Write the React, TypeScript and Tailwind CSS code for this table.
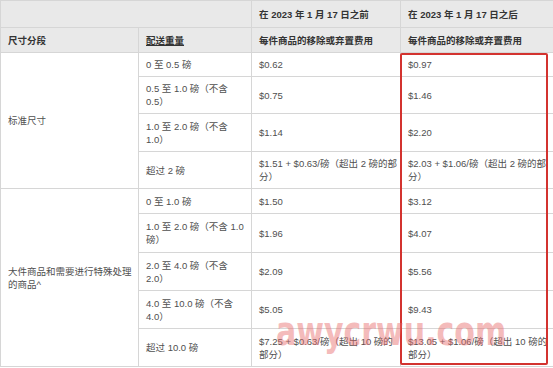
import React from "react";

type Row = {
  weight: React.ReactNode;
  before: React.ReactNode;
  after: React.ReactNode;
  h: string;
};

const standard: Row[] = [
  { weight: "0 至 0.5 磅", before: "$0.62", after: "$0.97", h: "h-[24px]" },
  {
    weight: (<>0.5 至 1.0 磅（不含<br />0.5）</>),
    before: "$0.75",
    after: "$1.46",
    h: "h-[37px]",
  },
  {
    weight: (<>1.0 至 2.0 磅（不含<br />1.0）</>),
    before: "$1.14",
    after: "$2.20",
    h: "h-[38px]",
  },
  {
    weight: "超过 2 磅",
    before: (<>$1.51 + $0.63/磅（超出 2 磅的部<br />分）</>),
    after: (<>$2.03 + $1.06/磅（超出 2 磅的部<br />分）</>),
    h: "h-[37px]",
  },
];

const oversize: Row[] = [
  { weight: "0 至 1.0 磅", before: "$1.50", after: "$3.12", h: "h-[25px]" },
  {
    weight: (<>1.0 至 2.0 磅（不含 1.0<br />磅）</>),
    before: "$1.96",
    after: "$4.07",
    h: "h-[39px]",
  },
  {
    weight: (<>2.0 至 4.0 磅（不含<br />2.0）</>),
    before: "$2.09",
    after: "$5.56",
    h: "h-[38px]",
  },
  {
    weight: (<>4.0 至 10.0 磅（不含<br />4.0）</>),
    before: "$5.05",
    after: "$9.43",
    h: "h-[38px]",
  },
  {
    weight: "超过 10.0 磅",
    before: (<>$7.25 + $0.63/磅（超出 10 磅的<br />部分）</>),
    after: (<>$13.05 + $1.06/磅（超出 10 磅的<br />部分）</>),
    h: "h-[38px]",
  },
];

const td = "border border-[#d6d6d6] pl-[7px] pr-[2px] align-middle whitespace-nowrap";
const th = "border border-[#d6d6d6] pl-[7px] pr-[2px] text-left align-middle font-bold text-[#333] whitespace-nowrap";

function Group({ label, rows }: { label: React.ReactNode; rows: Row[] }) {
  return (
    <>
      {rows.map((r, i) => (
        <tr key={i} className={r.h}>
          {i === 0 && (
            <td rowSpan={rows.length} className={td}>
              {label}
            </td>
          )}
          <td className={td}>{r.weight}</td>
          <td className={td}>{r.before}</td>
          <td className={td}>{r.after}</td>
        </tr>
      ))}
    </>
  );
}

export default function App() {
  return (
    <div
      className="relative w-[553px] h-[368px] overflow-hidden bg-white text-[9.5px] leading-[13px] text-[#4f4f4f]"
      style={{ fontFamily: '"Liberation Sans", "Noto Sans CJK SC", sans-serif' }}
    >
      <table className="w-[553px] table-fixed border-collapse">
        <colgroup>
          <col className="w-[138px]" />
          <col className="w-[113px]" />
          <col className="w-[149px]" />
          <col className="w-[153px]" />
        </colgroup>
        <thead className="bg-[#e9e9e9]">
          <tr className="h-[27px]">
            <th colSpan={2} className={th}></th>
            <th className={th}>在 2023 年 1 月 17 日之前</th>
            <th className={th}>在 2023 年 1 月 17 日之后</th>
          </tr>
          <tr className="h-[25px]">
            <th className={th}>尺寸分段</th>
            <th className={th}>
              <span className="underline">配送重量</span>
            </th>
            <th className={th}>每件商品的移除或弃置费用</th>
            <th className={th}>每件商品的移除或弃置费用</th>
          </tr>
        </thead>
        <tbody>
          <Group label="标准尺寸" rows={standard} />
          <Group
            label={(<>大件商品和需要进行特殊处理<br />的商品^</>)}
            rows={oversize}
          />
        </tbody>
      </table>

      {/* highlight box */}
      <div className="absolute left-[400px] top-[53px] w-[148px] h-[312px] border-2 border-[#d3332f] rounded-[2px] pointer-events-none" />

      {/* watermark */}
      <div
        className="absolute left-[276px] top-[311px] text-[40px] font-bold leading-none text-[#e86a6a] opacity-45 origin-left scale-x-[0.75] pointer-events-none whitespace-nowrap"
        style={{ fontFamily: '"DejaVu Sans", sans-serif' }}
      >
        awycrwu.com
      </div>
    </div>
  );
}
